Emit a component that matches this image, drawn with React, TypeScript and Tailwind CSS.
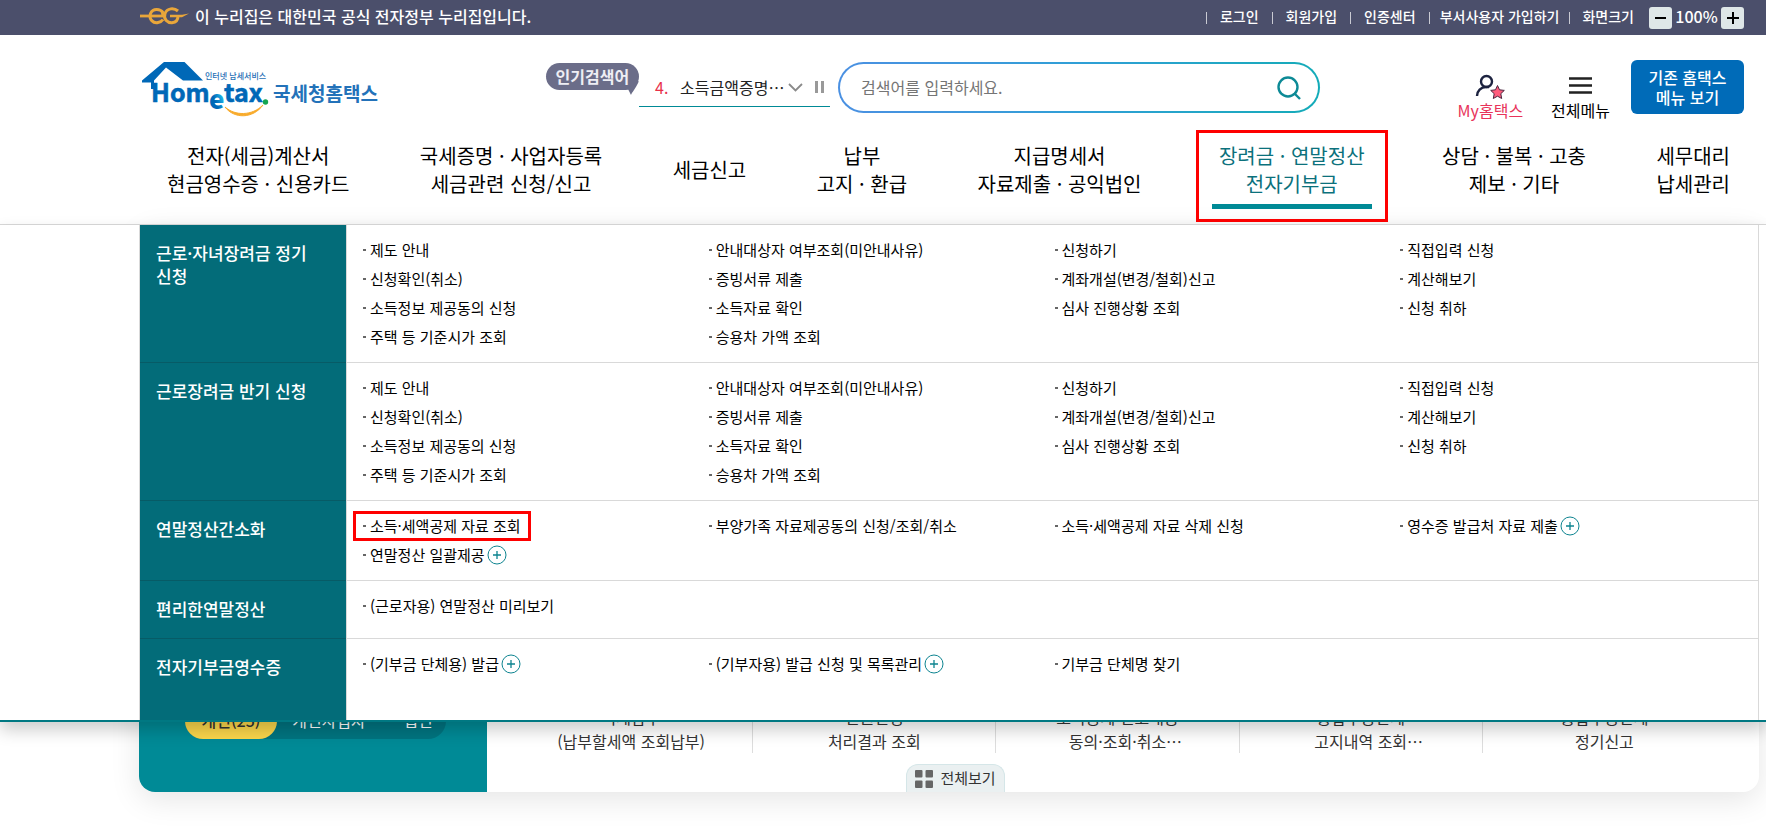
import { Fragment, useState } from 'react';

type MenuItem = {
    label: string;
    more?: boolean;
    marked?: boolean;
};

type MenuGroup = {
    title: string;
    columns: MenuItem[][];
};

const applyColumns: MenuItem[][] = [
    [
        { label: '제도 안내' },
        { label: '신청확인(취소)' },
        { label: '소득정보 제공동의 신청' },
        { label: '주택 등 기준시가 조회' }
    ],
    [
        { label: '안내대상자 여부조회(미안내사유)' },
        { label: '증빙서류 제출' },
        { label: '소득자료 확인' },
        { label: '승용차 가액 조회' }
    ],
    [
        { label: '신청하기' },
        { label: '계좌개설(변경/철회)신고' },
        { label: '심사 진행상황 조회' }
    ],
    [
        { label: '직접입력 신청' },
        { label: '계산해보기' },
        { label: '신청 취하' }
    ]
];

const menuGroups: MenuGroup[] = [
    { title: '근로·자녀장려금 정기 신청', columns: applyColumns },
    { title: '근로장려금 반기 신청', columns: applyColumns },
    {
        title: '연말정산간소화',
        columns: [
            [
                { label: '소득·세액공제 자료 조회', marked: true },
                { label: '연말정산 일괄제공', more: true }
            ],
            [{ label: '부양가족 자료제공동의 신청/조회/취소' }],
            [{ label: '소득·세액공제 자료 삭제 신청' }],
            [{ label: '영수증 발급처 자료 제출', more: true }]
        ]
    },
    {
        title: '편리한연말정산',
        columns: [[{ label: '(근로자용) 연말정산 미리보기' }]]
    },
    {
        title: '전자기부금영수증',
        columns: [
            [{ label: '(기부금 단체용) 발급', more: true }],
            [{ label: '(기부자용) 발급 신청 및 목록관리', more: true }],
            [{ label: '기부금 단체명 찾기' }]
        ]
    }
];

const navItems = [
    { lines: ['전자(세금)계산서', '현금영수증 · 신용카드'] },
    { lines: ['국세증명 · 사업자등록', '세금관련 신청/신고'] },
    { lines: ['세금신고'] },
    { lines: ['납부', '고지 · 환급'] },
    { lines: ['지급명세서', '자료제출 · 공익법인'] },
    { lines: ['장려금 · 연말정산', '전자기부금'], active: true },
    { lines: ['상담 · 불복 · 고충', '제보 · 기타'] },
    { lines: ['세무대리', '납세관리'] }
];

const quickLinks = [
    { first: '국세납부', second: '(납부할세액 조회납부)' },
    { first: '민원신청', second: '처리결과 조회' },
    { first: '소득공제 신고내용', second: '동의·조회·취소⋯', cut: true },
    { first: '종합부동산세', second: '고지내역 조회⋯', cut: true },
    { first: '종합부동산세', second: '정기신고' }
];

function GovMark() {
    return (
        <svg className="h-5 w-[49px]" viewBox="0 0 49 20" fill="none" stroke="#e9a63a" strokeWidth="3">
            <path d="M0 10h24" strokeWidth="2.800" />
            <path d="M23 6.500C20 2.500 13 2 10.500 7.500c-2 6 3 10 7.500 9 2-.3 4-1.500 5-3" />
            <path d="M22.500 10c.6-1.600.4-3-.5-4" />
            <path d="M38 5C34 1.500 27 2 25 7.500c-2 6 3 9.500 7 9.200 4-.3 6-3.200 6-6.700" />
            <path d="M30 8.800h12l7-1.300-7 3.700H30z" fill="#e9a63a" stroke="none" />
        </svg>
    );
}

function Logo() {
    return (
        <a href="#" aria-label="국세청 홈택스" className="block">
            <svg className="h-[58px] w-[240px]" viewBox="0 0 240 58" fontFamily='"Noto Sans CJK KR", sans-serif'>
                <defs>
                    <linearGradient id="logo-e" x1="0" y1="1" x2="1" y2="0">
                        <stop offset="0.4" stopColor="#0068b7" />
                        <stop offset="0.7" stopColor="#1fb4e8" />
                    </linearGradient>
                </defs>
                <path d="M22 1h20.500l18.500 18.500H41L24 6.500 12 19.500V28H9v-6.500H0v-2z" fill="#0068b7" />
                <g fill="#0068b7" stroke="#0068b7" fontSize="25" fontWeight="700">
                    <text x="9" y="41" strokeWidth="0.600">Hom</text>
                    <text x="82" y="41" strokeWidth="0.600">tax</text>
                </g>
                <text x="67" y="48" fontSize="26" fontWeight="900" fill="url(#logo-e)">e</text>
                <circle cx="123.500" cy="41" r="2.700" fill="#14a650" />
                <path d="M83 46c10 9 27 9 38-2-10 14-29 14-38 2z" fill="#f8ab2c" stroke="#f8ab2c" />
                <text x="63" y="18" fontSize="8" fontWeight="500" fill="#1f6fb5">인터넷 납세서비스</text>
                <text x="131" y="40" fontSize="19" fontWeight="700" fill="#2372b9">국세청홈택스</text>
            </svg>
        </a>
    );
}

function MyIcon() {
    return (
        <svg className="h-[26px] w-[30px]" viewBox="0 0 30 26" fill="none">
            <circle cx="11.500" cy="7.500" r="5.500" stroke="#1d2340" strokeWidth="2.400" />
            <path d="M2 22c0-5 4-9 9-9h3" stroke="#1d2340" strokeWidth="2.400" />
            <path
                d="M22.500 11.500l2 4.300 4.800.6-3.500 3.300.9 4.800-4.200-2.300-4.200 2.300.9-4.800-3.500-3.300 4.800-.6z"
                fill="#ff5c7c"
                stroke="#4a2740"
                strokeWidth="1"
                strokeLinejoin="round"
            />
        </svg>
    );
}

function PlusCircle() {
    return (
        <svg className="h-5 w-5 shrink-0" viewBox="0 0 20 20" fill="none" stroke="#0d8490">
            <circle cx="10" cy="10" r="9" />
            <path d="M6 10h8M10 6v8" strokeWidth="1.300" />
        </svg>
    );
}

function TopBar() {
    const [zoom, setZoom] = useState(100);
    const links = ['로그인', '회원가입', '인증센터'];

    return (
        <div className="flex h-[35px] items-center justify-between bg-[#4b4f6b] pr-[22px] pl-[140px] text-white">
            <div className="flex items-center gap-1.5 pb-1">
                <GovMark />
                <span className="text-base leading-6 font-medium">이 누리집은 대한민국 공식 전자정부 누리집입니다.</span>
            </div>
            <div className="flex items-center text-sm font-medium">
                {links.map((link) => (
                    <Fragment key={link}>
                        <span className="h-3 w-px bg-[#c9cad3]" />
                        <a href="#" className="px-[13px] pb-1">{link}</a>
                    </Fragment>
                ))}
                <span className="h-3 w-px bg-[#c9cad3]" />
                <a href="#" className="px-[10px] pb-1">부서사용자 가입하기</a>
                <span className="h-3 w-px bg-[#c9cad3]" />
                <span className="pr-[15px] pb-1 pl-[12px]">화면크기</span>
                <button
                    type="button"
                    aria-label="축소"
                    onClick={() => setZoom(zoom - 10)}
                    className="flex h-[22px] w-[23px] items-center justify-center rounded-[3px] bg-[#dfe7e8]"
                >
                    <span className="h-0.5 w-[11px] bg-black" />
                </button>
                <span className="w-[49px] pb-1 text-center text-base leading-6">{zoom}%</span>
                <button
                    type="button"
                    aria-label="확대"
                    onClick={() => setZoom(zoom + 10)}
                    className="flex h-[22px] w-[23px] items-center justify-center rounded-[3px] bg-[#dfe7e8]"
                >
                    <svg className="h-3 w-3" viewBox="0 0 12 12" stroke="#000" strokeWidth="2">
                        <path d="M0 6h12M6 0v12" />
                    </svg>
                </button>
            </div>
        </div>
    );
}

function SearchArea() {
    return (
        <div className="flex items-start">
            {/* 인기검색어 말풍선 */}
            <div className="relative mt-px rounded-full bg-[#6b6d89] px-[10px] text-base leading-[27px] font-bold text-[#eeeef4]">
                인기검색어
                <svg className="absolute top-[18px] right-0 h-[14px] w-[14px]" viewBox="0 0 14 14" fill="#6b6d89">
                    <path d="M0 8h3l3 6c1-3 4-5 8-14z" />
                </svg>
            </div>
            <div className="flex h-[45px] w-[191px] items-center border-b border-[#008a96] pt-1.5 pl-4 text-base">
                <span className="w-[25px] text-[#e8304a]">4.</span>
                <a href="#" className="text-[#222] whitespace-nowrap">소득금액증명⋯</a>
                <button type="button" aria-label="인기검색어 펼치기" className="ml-1">
                    <svg className="h-[9px] w-[15px]" viewBox="0 0 15 9" fill="none" stroke="#8a8a8a" strokeWidth="1.800">
                        <path d="M1 1l6.500 6.500L14 1" />
                    </svg>
                </button>
                <button type="button" aria-label="정지" className="ml-3 flex gap-[3px]">
                    <span className="h-3 w-[3px] bg-[#999]" />
                    <span className="h-3 w-[3px] bg-[#999]" />
                </button>
            </div>
            <form className="ml-2 w-[482px] rounded-full bg-linear-to-r from-[#4a90e2] via-[#2f9fd6] to-[#13abb8] p-0.5" onSubmit={(e) => e.preventDefault()}>
                <div className="flex h-[47px] items-center rounded-full bg-white pr-[17px] pl-[21px]">
                    <input
                        type="text"
                        aria-label="검색어"
                        placeholder="검색어를 입력하세요."
                        className="min-w-0 flex-1 pb-0.5 text-base placeholder-[#757575] outline-none"
                    />
                    <button type="submit" aria-label="검색">
                        <svg className="h-6 w-6" viewBox="0 0 24 24" fill="none" stroke="#0d8a96" strokeWidth="2.400">
                            <circle cx="11" cy="11" r="9.500" />
                            <path d="M17 17l6 6" />
                        </svg>
                    </button>
                </div>
            </form>
        </div>
    );
}

function MainNav() {
    return (
        <nav className="flex h-[94px] justify-between pt-[10px] pr-9 pl-[167px] text-xl leading-7 text-black">
            {navItems.map((item) => (
                <a
                    key={item.lines[0]}
                    href="#"
                    className={
                        item.active
                            ? 'relative flex h-[60px] flex-col items-center justify-center px-[7px] whitespace-nowrap text-[#0b717c]'
                            : 'flex h-[60px] flex-col items-center justify-center whitespace-nowrap'
                    }
                >
                    {item.lines.map((line) => (
                        <span key={line}>{line}</span>
                    ))}
                    {item.active && (
                        <>
                            <span className="absolute inset-x-0 top-16 h-[5px] bg-[#008a96]" />
                            <span className="absolute -inset-x-4 -top-[10px] h-[92px] border-3 border-[#fe0000]" />
                        </>
                    )}
                </a>
            ))}
        </nav>
    );
}

function MegaMenu() {
    return (
        <div className="absolute inset-x-0 top-full z-10 mt-px border-b-2 border-[#007882] bg-white pr-[7px] pl-[139px] shadow-[0_8px_16px_rgba(0,0,0,0.2)]">
            <div className="flex flex-col border-x border-[#d9d9d9]">
                {menuGroups.map((group) => (
                    <section key={group.title} className="group flex min-h-[58px] last:min-h-[81px]">
                        <h2 className="w-[206px] shrink-0 border-b border-[#075b66] bg-[#036c79] pt-4 pr-5 pl-4 text-[17px] leading-[23px] font-medium break-keep text-white group-last:border-b-0">
                            {group.title}
                        </h2>
                        <div className="grid flex-1 grid-cols-4 border-b border-l border-[#d9d9d9] pt-[10px] pr-3 pb-[11px] pl-4 group-last:border-b-0">
                            {group.columns.map((column, i) => (
                                <ul key={i}>
                                    {column.map((item) => (
                                        <li key={item.label} className="flex h-[29px] items-center">
                                            <a
                                                href="#"
                                                className="relative flex items-center gap-1 text-[15px] leading-6 whitespace-nowrap text-black"
                                            >
                                                <span className="h-0.5 w-[3px] bg-[#666]" />
                                                {item.label}
                                                {item.marked && (
                                                    <span className="absolute -inset-x-[10px] -inset-y-[3px] border-3 border-[#fe0000]" />
                                                )}
                                            </a>
                                            {item.more && (
                                                <button type="button" aria-label={`${item.label} 더보기`} className="ml-0.5">
                                                    <PlusCircle />
                                                </button>
                                            )}
                                        </li>
                                    ))}
                                </ul>
                            ))}
                        </div>
                    </section>
                ))}
            </div>
        </div>
    );
}

function QuickCard() {
    return (
        <main className="pr-[7px] pb-[47px] pl-[139px]">
            <div className="flex min-h-[567px] rounded-2xl bg-white shadow-[0_8px_30px_rgba(0,0,0,0.1)]">
                <div className="flex w-[348px] flex-col justify-end rounded-bl-2xl bg-[#008a96] pb-[53px] pl-[46px]">
                    <div className="flex h-9 w-[261px] items-center rounded-full bg-[#007480] text-base text-white">
                        <button type="button" className="h-9 w-[92px] rounded-full bg-[#fbd64b] pb-0.5 font-medium text-[#333]">개인(25)</button>
                        <button type="button" className="w-[104px] pb-0.5">개인사업자</button>
                        <button type="button" className="ml-5 w-[34px] pb-0.5">법인</button>
                    </div>
                </div>
                <div className="flex flex-1 flex-col items-center justify-end">
                    <ul className="grid w-full grid-cols-5 pr-[33px] pl-[23px]">
                        {quickLinks.map((link, i) => (
                            <li key={i} className="border-r border-[#ddd] last:border-r-0">
                                <a href="#" className="flex h-[60px] flex-col items-center justify-end text-base leading-6 text-[#333]">
                                    <span>{link.first}</span>
                                    <span className={link.cut ? 'pl-4' : undefined}>{link.second}</span>
                                </a>
                            </li>
                        ))}
                    </ul>
                    <button
                        type="button"
                        className="mt-[11px] ml-[419px] flex h-7 w-[99px] items-center justify-center gap-[7px] self-start rounded-t-xl border border-b-0 border-[#d5e6e8] bg-[#eaf0f1] text-[15px] text-[#333]"
                    >
                        <svg className="h-[18px] w-[18px]" viewBox="0 0 18 18" fill="#666">
                            <rect width="7.500" height="7.500" rx="1" />
                            <rect x="10.500" width="7.500" height="7.500" rx="1" />
                            <rect y="10.500" width="7.500" height="7.500" rx="1" />
                            <rect x="10.500" y="10.500" width="7.500" height="7.500" rx="1" />
                        </svg>
                        전체보기
                    </button>
                </div>
            </div>
        </main>
    );
}

export default function App() {
    return (
        <div className="overflow-hidden bg-white font-['Noto_Sans_CJK_KR',sans-serif]" lang="ko">
            <TopBar />
            <header className="relative border-b border-[#d9d9d9]">
                <div className="flex h-[95px] items-start justify-between pr-[22px] pl-[142px]">
                    <div className="pt-[26px]">
                        <Logo />
                    </div>
                    <div className="pt-[27px] pl-[26px]">
                        <SearchArea />
                    </div>
                    <div className="flex items-start">
                        <a href="#" className="mt-[39px] flex flex-col items-center text-base leading-5 text-[#e8335a]">
                            <MyIcon />
                            My홈택스
                        </a>
                        <button type="button" className="mt-[42px] ml-7 flex flex-col items-center text-base leading-5 text-black">
                            <svg className="mb-1.5 h-[17px] w-[23px]" viewBox="0 0 23 17" stroke="#222" strokeWidth="2.400">
                                <path d="M0 1.500h23M0 8.500h23M0 15.500h23" />
                            </svg>
                            전체메뉴
                        </button>
                        <a href="#" className="mt-[25px] ml-[21px] flex h-[54px] w-[113px] flex-col items-center justify-center rounded-md bg-[#006bb8] text-base leading-5 font-medium text-white">
                            <span>기존 홈택스</span>
                            <span>메뉴 보기</span>
                        </a>
                    </div>
                </div>
                <MainNav />
                <MegaMenu />
            </header>
            <QuickCard />
        </div>
    );
}
